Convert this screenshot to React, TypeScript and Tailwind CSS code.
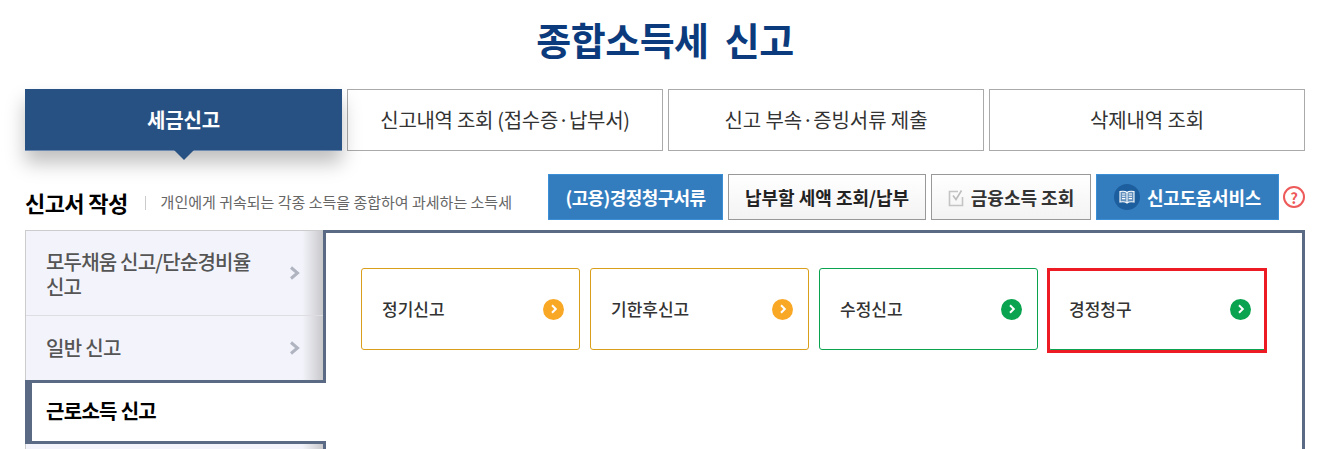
const FONT = "font-['Noto_Sans_CJK_KR','Noto_Sans',sans-serif]";

function Chevron({ className }: { className: string }) {
  return (
    <span className={`flex h-[21px] w-[21px] items-center justify-center rounded-full ${className}`}>
      <svg viewBox="0 0 10 10" className="h-[10px] w-[10px]" fill="none" stroke="#fff" strokeWidth="2">
        <path d="M3 1.2 L6.8 5 L3 8.8" />
      </svg>
    </span>
  );
}

function SideArrow() {
  return (
    <svg viewBox="0 0 12 14" className="h-[14px] w-[12px] shrink-0" fill="none" stroke="#b0b3c0" strokeWidth="3">
      <path d="M2 1.5 L8.5 7 L2 12.5" />
    </svg>
  );
}

function BookIcon() {
  return (
    <span className="flex h-[26px] w-[26px] items-center justify-center rounded-full bg-[#1d5e9e]">
      <svg viewBox="0 0 16 14" className="h-[14px] w-[16px]" fill="none" stroke="#fff" strokeWidth="1.1">
        <path d="M8 2.5 C6.5 1.2 3.5 1 1 1.5 V12 C3.5 11.5 6.5 11.7 8 13 C9.5 11.7 12.5 11.5 15 12 V1.5 C12.5 1 9.5 1.2 8 2.5 Z" fill="#dfeaf5" fillOpacity="0.35" />
        <path d="M8 2.5 V13 M3 4 H6.3 M3 6.3 H6.3 M3 8.6 H6.3 M9.7 4 H13 M9.7 6.3 H13 M9.7 8.6 H13" />
      </svg>
    </span>
  );
}

function CheckIcon() {
  return (
    <svg viewBox="0 0 16 18" className="h-[18px] w-[16px]" fill="none">
      <path d="M10 2.5 H1.5 V16.5 H14.5 V8" stroke="#c4c4c4" strokeWidth="1.6" />
      <path d="M5 6.5 L8 10.5 L13.5 1.5" stroke="#bdbdbd" strokeWidth="1.6" />
    </svg>
  );
}

const tabs = ["세금신고", "신고내역 조회 (접수증·납부서)", "신고 부속·증빙서류 제출", "삭제내역 조회"];

const cards = [
  { label: "정기신고", border: "border-[#d99e1a]", icon: "bg-[#f9a826]" },
  { label: "기한후신고", border: "border-[#d99e1a]", icon: "bg-[#f9a826]" },
  { label: "수정신고", border: "border-[#0aa34f]", icon: "bg-[#0aa34f]" },
  { label: "경정청구", border: "border-[#0aa34f]", icon: "bg-[#0aa34f]" },
];

export default function App() {
  return (
    <div className={`h-[449px] overflow-hidden bg-white pl-[25px] pr-[13px] ${FONT}`}>
      {/* title */}
      <h1 className="h-[89px] pt-[9px] text-center text-[38px] leading-[60px] font-bold tracking-[-0.5px] text-[#0b3b7c]">
        종합소득세&nbsp; 신고
      </h1>

      {/* tabs */}
      <div className="flex gap-[5px]">
        {tabs.map((t, i) =>
          i === 0 ? (
            <div
              key={t}
              className="relative flex h-[62px] w-[317px] items-center justify-center border-b border-[#6d8bb0] bg-[#275182] text-[20px] font-bold tracking-[-0.1px] text-white shadow-[0_12px_18px_rgba(0,0,0,0.25)]"
            >
              {t}
              <span className="absolute top-full left-1/2 h-0 w-0 -translate-x-1/2 border-x-[10px] border-t-[10px] border-x-transparent border-t-[#275182]" />
            </div>
          ) : (
            <div
              key={t}
              className={`flex h-[62px] w-[316px] items-center justify-center border border-[#aaaaaa] bg-white text-[20px] text-[#333333] ${i === 1 ? "tracking-[-0.3px]" : "tracking-[-0.1px]"}`}
            >
              {t}
            </div>
          ),
        )}
      </div>

      {/* sub header */}
      <div className="mt-[23px] flex h-[46px] items-center">
        <div className="flex items-center pt-[11px]">
          <h2 className="text-[22px] font-bold tracking-[-0.6px] text-black">신고서 작성</h2>
          <span className="mr-[15px] ml-[17px] h-[14px] w-px bg-[#cccccc]" />
          <p className="text-[15px] text-[#666666]">개인에게 귀속되는 각종 소득을 종합하여 과세하는 소득세</p>
        </div>
        <div className="ml-auto flex items-center gap-[5px] text-[18px] font-bold">
          <button className="flex h-[46px] w-[175px] items-center justify-center border border-[#3a8fd6] bg-[#337dbf] pt-px tracking-[-0.6px] text-white">(고용)경정청구서류</button>
          <button className="flex h-[46px] w-[198px] items-center justify-center border border-[#999999] bg-gradient-to-b from-white to-[#f3f3f3] pt-px text-[#222222]">납부할 세액 조회/납부</button>
          <button className="flex h-[46px] w-[160px] items-center justify-center gap-[7px] border border-[#999999] bg-gradient-to-b from-white to-[#f3f3f3] pt-px text-[#333333]">
            <CheckIcon />
            금융소득 조회
          </button>
          <button className="flex h-[46px] w-[183px] items-center justify-center gap-[7px] border border-[#3a8fd6] bg-[#337dbf] tracking-[-0.3px] text-white">
            <BookIcon />
            <span className="pt-px">신고도움서비스</span>
          </button>
          <span className="-ml-px flex h-[22px] w-[22px] items-center justify-center rounded-full border-2 border-[#ee5a5a] text-[15px] leading-none font-bold text-[#ee5a5a]">?</span>
        </div>
      </div>

      {/* body */}
      <div className="mt-[10px] flex">
        <div className="w-[298px] shrink-0 border-t border-l border-[#cccccc]">
          <div className="flex h-[85px] items-center justify-between border-b border-[#dddde2] bg-gradient-to-r from-[#f3f4fb] from-[93%] to-[#c9c9cc] pr-[22px] pl-[20px] text-[20px] leading-[25px] font-medium tracking-[-0.8px] text-[#555555]">
            <span className="w-[210px] pt-[2px]">모두채움 신고/단순경비율 신고</span>
            <SideArrow />
          </div>
          <div className="flex h-[64px] items-center justify-between bg-gradient-to-r from-[#f3f4fb] from-[93%] to-[#c9c9cc] pr-[22px] pb-px pl-[20px] text-[20px] font-medium tracking-[-0.7px] text-[#555555]">
            <span>일반 신고</span>
            <SideArrow />
          </div>
          <div className="relative z-10 -ml-px flex h-[64px] w-[301px] items-center border-y-[3px] border-l-[7px] border-[#5a6a85] bg-white pb-[2px] pl-[14px] text-[20px] font-bold tracking-[-0.7px] text-black">
            근로소득 신고
          </div>
          <div className="h-[40px] bg-gradient-to-r from-[#f3f4fb] from-[93%] to-[#c9c9cc]" />
        </div>
        <div className="h-[300px] flex-1 border-[3px] border-[#5a6a85] bg-white pt-[35px] pl-[35px]">
          <div className="relative flex gap-[10px]">
            {cards.map((c) => (
              <div
                key={c.label}
                className={`flex h-[82px] w-[219px] items-center justify-between rounded-[3px] border pr-[15px] pl-[20px] text-[17px] font-medium text-[#333333] ${c.border}`}
              >
                <span className="pb-px">{c.label}</span>
                <Chevron className={c.icon} />
              </div>
            ))}
            {/* red annotation box */}
            <div className="absolute top-0 left-[686px] h-[85px] w-[220px] border-[3px] border-[#ed1c24]" />
          </div>
        </div>
      </div>
    </div>
  );
}
